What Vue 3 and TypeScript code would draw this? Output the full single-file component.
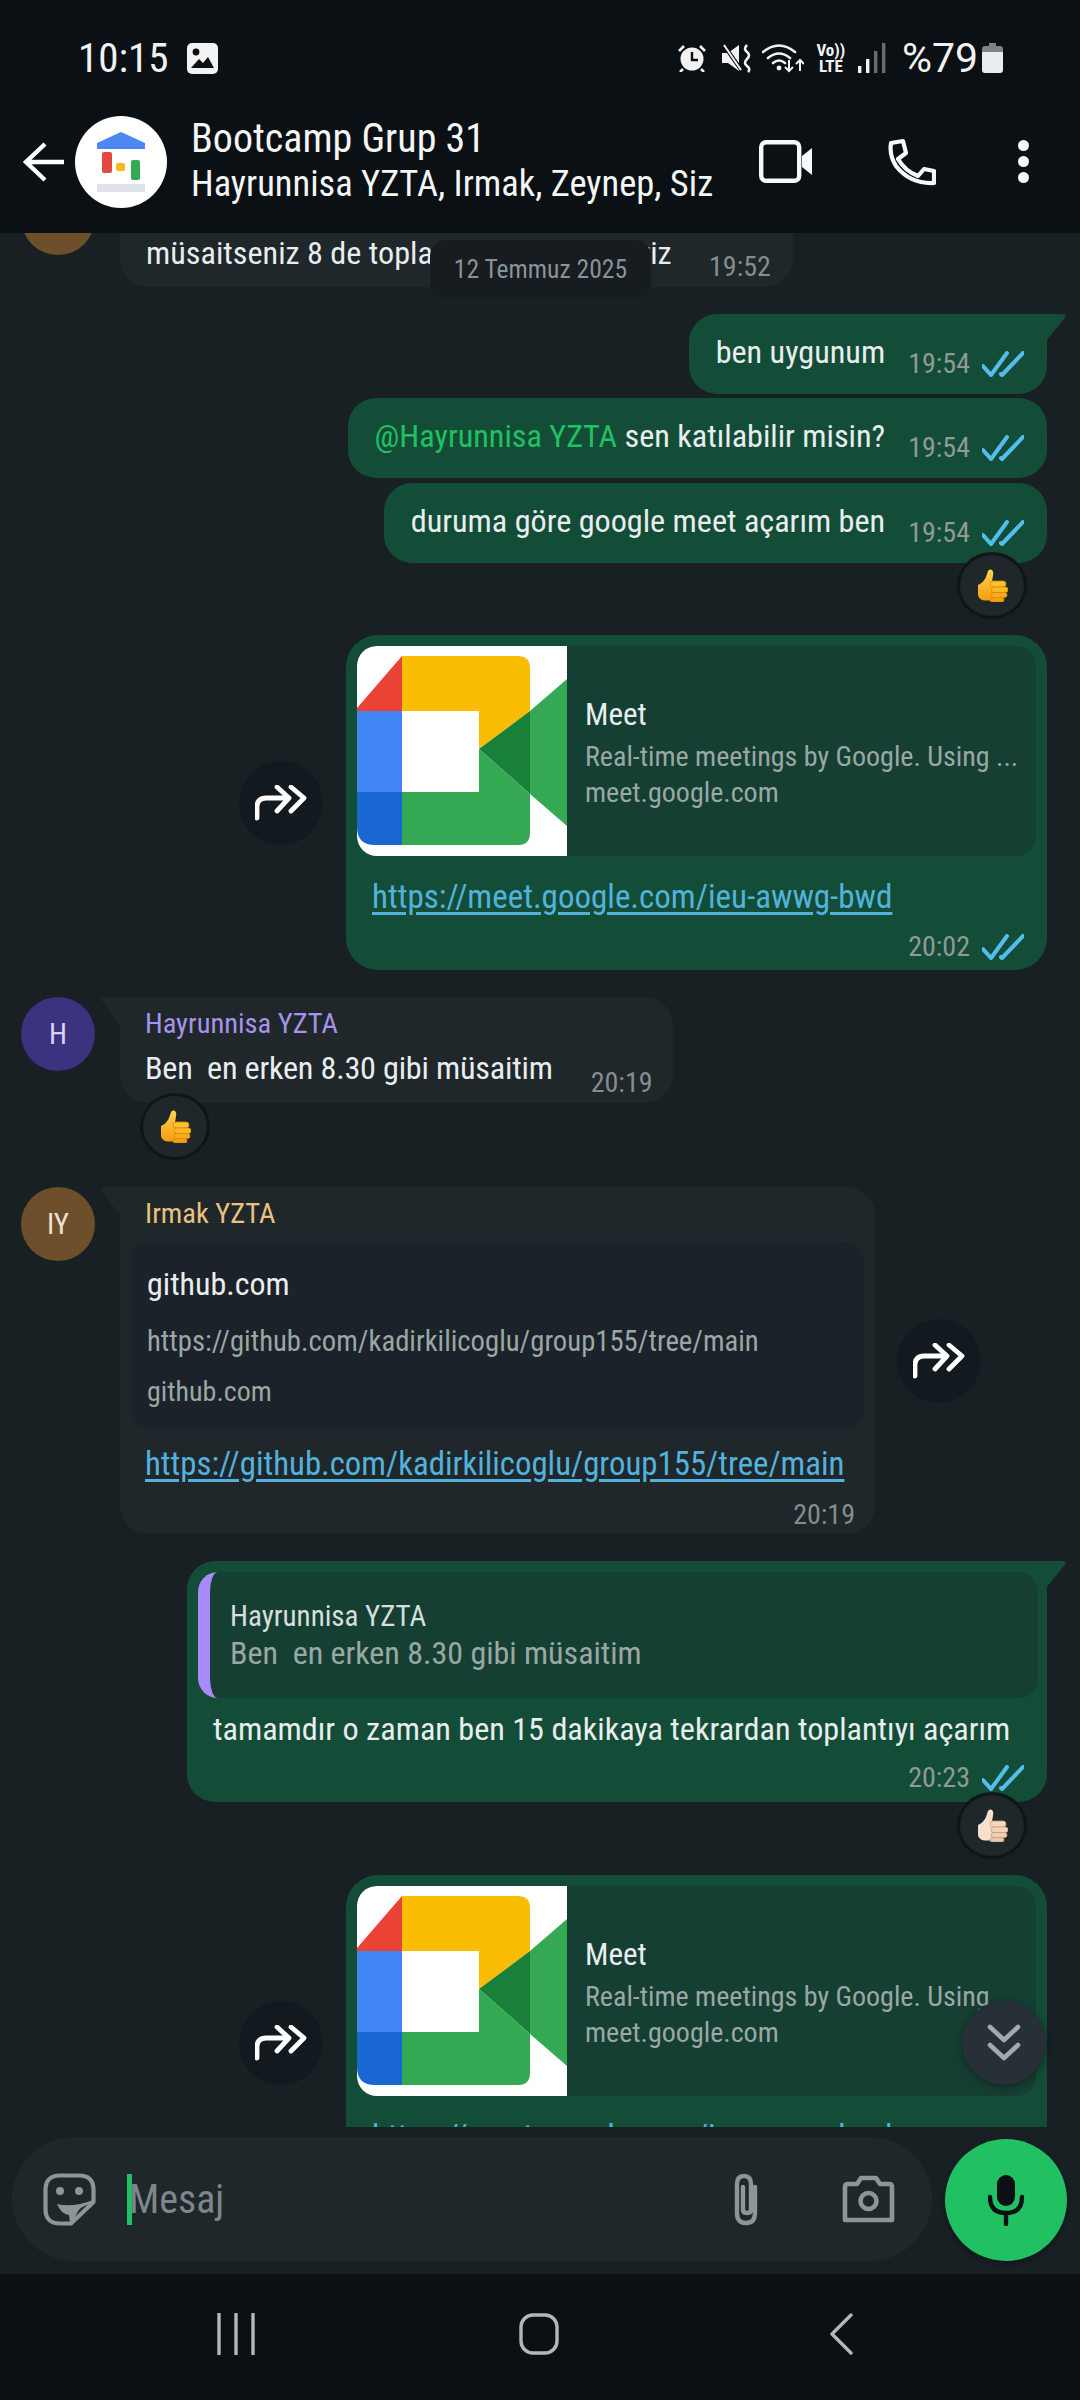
<script setup lang="ts">
const meetText = "Real-time meetings by Google. Using ...";
</script>

<template>
  <div class="phone">
    <svg class="sprite" width="0" height="0">
      <defs>
        <linearGradient id="gold" x1="0" y1="0" x2="0" y2="1">
          <stop offset="0" stop-color="#ffd54a" />
          <stop offset="1" stop-color="#f69d10" />
        </linearGradient>
      </defs>
      <symbol id="ticks" viewBox="0 0 42 26">
        <path d="M1 15l8 9L25 2M19 23l1 1L41 2" fill="none" stroke="#53bdeb" stroke-width="4" stroke-linecap="round" stroke-linejoin="round" />
      </symbol>
      <symbol id="forward" viewBox="0 0 52 36">
        <path d="M2 33V22q0-9 9-9h22" fill="none" stroke="#fff" stroke-width="4.8" stroke-linecap="round" />
        <path d="M22 2l12 11-12 13M36 2l13 11-13 13" fill="none" stroke="#fff" stroke-width="4.8" stroke-linecap="round" stroke-linejoin="round" />
      </symbol>
      <symbol id="thumb" viewBox="0 0 31 33">
        <path d="M1 16q6-3 8-8 1-3 2-6 1-2 3-1.500 3 1 2 6l-1 6v19H8q-4 0-6-3-1-1-1-3z" fill="url(#gold)" />
        <rect x="13" y="12" width="16" height="6" rx="3" fill="#fcc22e" stroke="#d98a0b" stroke-width=".8" />
        <rect x="14" y="18" width="17" height="5.500" rx="2.700" fill="#fcb824" stroke="#d98a0b" stroke-width=".8" />
        <rect x="14" y="23.500" width="16" height="5" rx="2.500" fill="#f8aa18" stroke="#d98a0b" stroke-width=".8" />
        <rect x="13" y="28.500" width="14" height="4.500" rx="2.200" fill="#f59f10" stroke="#d98a0b" stroke-width=".8" />
      </symbol>
      <symbol id="thumb-light" viewBox="0 0 31 33">
        <path d="M1 16q6-3 8-8 1-3 2-6 1-2 3-1.500 3 1 2 6l-1 6v19H8q-4 0-6-3-1-1-1-3z" fill="#f8e0cc" />
        <rect x="13" y="12" width="16" height="6" rx="3" fill="#f6d8c0" stroke="#cf9f7e" stroke-width=".8" />
        <rect x="14" y="18" width="17" height="5.500" rx="2.700" fill="#f4d3ba" stroke="#cf9f7e" stroke-width=".8" />
        <rect x="14" y="23.500" width="16" height="5" rx="2.500" fill="#f0cdb3" stroke="#cf9f7e" stroke-width=".8" />
        <rect x="13" y="28.500" width="14" height="4.500" rx="2.200" fill="#ebc5a9" stroke="#cf9f7e" stroke-width=".8" />
      </symbol>
      <symbol id="meet" viewBox="0 0 210 210">
        <rect width="210" height="210" fill="#fff" />
        <path d="M45 10L0 62v3h45z" fill="#ea4335" />
        <path d="M45 10h116q12 0 12 12v43l-51 38V65H45z" fill="#fbbc04" />
        <path d="M173 65l37-32v147l-37-32z" fill="#34a853" />
        <path d="M122 103l51-38v83z" fill="#188038" />
        <path d="M45 146h77v-43l51 45v39q0 12-12 12H45z" fill="#34a853" />
        <rect y="65" width="45" height="81" fill="#4285f4" />
        <path d="M0 146h45v53H18q-18 0-18-18z" fill="#1967d2" />
      </symbol>
    </svg>

    <div class="status">
      <span class="clock">10:15</span>
      <svg class="gallery" width="31" height="31" viewBox="0 0 31 31">
        <rect width="31" height="31" rx="5" fill="#f2f2f2" />
        <circle cx="9" cy="9" r="3.4" fill="#0b1014" />
        <path d="M4 25l8-9 4 4 5-6 6 11z" fill="#0b1014" />
      </svg>
      <div class="status-right">
        <svg class="alarm" width="30" height="28" viewBox="0 0 30 28">
          <circle cx="15" cy="15" r="11.5" fill="#f2f2f2" />
          <path d="M15 8v8h6" fill="none" stroke="#0b1014" stroke-width="2.4" />
          <path d="M2 7l5-5M28 7l-5-5M6 25l-3 3M24 25l3 3" stroke="#f2f2f2" stroke-width="2.6" />
        </svg>
        <svg width="30" height="30" viewBox="0 0 30 30">
          <path d="M0 10h6l11-8v26l-11-8H0z" fill="#f2f2f2" />
          <path d="M1 1l19 27" stroke="#0b1014" stroke-width="4" />
          <path d="M2 2l17 25" stroke="#f2f2f2" stroke-width="2" />
          <path d="M25 2q-4 4 0 7t0 7 0 7 1 6" fill="none" stroke="#f2f2f2" stroke-width="2.6" />
        </svg>
        <svg width="42" height="30" viewBox="0 0 42 30">
          <path d="M1 9q16-13 32 0M6 15q11-9 22 0M11 20q6-5 12 0" fill="none" stroke="#f2f2f2" stroke-width="2.6" stroke-linecap="round" />
          <circle cx="17" cy="25" r="2.4" fill="#f2f2f2" />
          <path d="M27 17v11M23 24l4 4 4-4M38 28V17M34 21l4-4 4 4" fill="none" stroke="#f2f2f2" stroke-width="2" />
        </svg>
        <div class="volte"><span>Vo))</span><span>LTE</span></div>
        <svg width="28" height="30" viewBox="0 0 28 30">
          <rect y="23" width="3.4" height="7" fill="#f2f2f2" />
          <rect x="8" y="16" width="3.4" height="14" fill="#f2f2f2" />
          <rect x="16" y="8" width="3.4" height="22" fill="#666c70" />
          <rect x="24" y="0" width="3.4" height="30" fill="#666c70" />
        </svg>
        <span class="percent">%79</span>
        <svg class="battery" width="21" height="30" viewBox="0 0 21 30">
          <path d="M7 0h7v3h4q3 0 3 3v5H0V6q0-3 3-3h4z" fill="#7d8285" />
          <path d="M0 9h21v18q0 3-3 3H3q-3 0-3-3z" fill="#ececec" />
        </svg>
      </div>
    </div>

    <header class="header">
      <svg width="42" height="40" viewBox="0 0 42 40">
        <path d="M22 2L3 20l19 18M3 20h38" fill="none" stroke="#fff" stroke-width="4.4" />
      </svg>
      <div class="group-avatar">
        <svg width="92" height="92" viewBox="0 0 92 92">
          <path d="M22 27L46 16l24 11v6H22z" fill="#4b89f0" />
          <rect x="27" y="36" width="10" height="21" rx="2" fill="#e5483c" />
          <rect x="41" y="47" width="9" height="8" rx="2" fill="#f5b921" />
          <rect x="56" y="44" width="9" height="20" rx="2" fill="#34a853" />
          <rect x="22" y="68" width="48" height="8" fill="#dfe2e8" />
        </svg>
      </div>
      <div class="titles">
        <div class="title">Bootcamp Grup 31</div>
        <div class="subtitle">Hayrunnisa YZTA, Irmak, Zeynep, Siz</div>
      </div>
      <div class="actions">
        <svg width="53" height="43" viewBox="0 0 53 43">
          <rect x="2.2" y="2.2" width="38" height="38.600" rx="5" fill="none" stroke="#f7f8fa" stroke-width="4.4" />
          <path d="M43 16l10-8v27l-10-8z" fill="#f7f8fa" />
        </svg>
        <svg class="call" width="48" height="48" viewBox="0 0 48 48">
          <path d="M3 5l12-2 3 12-8 6q7 12 20 17l6-7 10 2v12q-24 1-38-17Q1 17 3 5z" fill="none" stroke="#f7f8fa" stroke-width="4.2" stroke-linejoin="round" />
        </svg>
        <div class="dots"><i></i><i></i><i></i></div>
      </div>
    </header>

    <main class="chat">
      <div class="row in first">
        <div class="avatar brown">IY</div>
        <div class="bubble in-bubble clipped">
          <div class="line">
            <span class="text">müsaitseniz 8 de toplanalım konuşabiliriz</span>
            <span class="meta"><span class="time">19:52</span></span>
          </div>
        </div>
      </div>

      <div class="row out gap-first">
        <div class="bubble out-bubble tail-right short">
          <span class="text">ben uygunum</span>
          <span class="meta"><span class="time">19:54</span><svg class="ticks"><use href="#ticks" /></svg></span>
        </div>
      </div>
      <div class="row out gap-4">
        <div class="bubble out-bubble short">
          <span class="text"><span class="mention">@Hayrunnisa YZTA</span> sen katılabilir misin?</span>
          <span class="meta"><span class="time">19:54</span><svg class="ticks"><use href="#ticks" /></svg></span>
        </div>
      </div>
      <div class="row out gap-5">
        <div class="bubble out-bubble short">
          <span class="text">duruma göre google meet açarım ben</span>
          <span class="meta"><span class="time">19:54</span><svg class="ticks"><use href="#ticks" /></svg></span>
        </div>
      </div>
      <div class="reaction-row right tight">
        <div class="reaction"><svg width="31" height="33"><use href="#thumb" /></svg></div>
      </div>

      <div class="row out forward-row gap-15">
        <div class="forward"><svg width="52" height="36"><use href="#forward" /></svg></div>
        <div class="bubble out-bubble meet-bubble">
          <div class="link-preview">
            <svg class="meet-img" width="210" height="210"><use href="#meet" /></svg>
            <div class="preview-text">
              <div class="preview-title">Meet</div>
              <div class="preview-desc first-desc">{{ meetText }}</div>
              <div class="preview-desc">meet.google.com</div>
            </div>
          </div>
          <div class="link meet-link">https://meet.google.com/ieu-awwg-bwd</div>
          <div class="meta-line"><span class="time">20:02</span><svg class="ticks"><use href="#ticks" /></svg></div>
        </div>
      </div>

      <div class="row in gap-27">
        <div class="avatar purple">H</div>
        <div class="bubble in-bubble tail-left hayr">
          <div class="name lilac">Hayrunnisa YZTA</div>
          <div class="line">
            <span class="text">Ben&nbsp; en erken 8.30 gibi müsaitim</span>
            <span class="meta"><span class="time">20:19</span></span>
          </div>
        </div>
      </div>
      <div class="reaction-row left">
        <div class="reaction"><svg width="31" height="33"><use href="#thumb" /></svg></div>
      </div>

      <div class="row in gap-27 with-forward">
        <div class="avatar brown">IY</div>
        <div class="bubble in-bubble tail-left github">
          <div class="name sand">Irmak YZTA</div>
          <div class="github-preview">
            <div class="preview-title">github.com</div>
            <div class="preview-desc url">https://github.com/kadirkilicoglu/group155/tree/main</div>
            <div class="preview-desc domain">github.com</div>
          </div>
          <div class="link github-link">https://github.com/kadirkilicoglu/group155/tree/main</div>
          <div class="meta-line in-meta"><span class="time">20:19</span></div>
        </div>
        <div class="forward"><svg width="52" height="36"><use href="#forward" /></svg></div>
      </div>

      <div class="row out gap-27">
        <div class="bubble out-bubble tail-right reply">
          <div class="quote">
            <div class="quote-name">Hayrunnisa YZTA</div>
            <div class="quote-text">Ben&nbsp; en erken 8.30 gibi müsaitim</div>
          </div>
          <div class="reply-body text">tamamdır o zaman ben 15 dakikaya tekrardan toplantıyı açarım</div>
          <div class="meta-line reply-meta"><span class="time">20:23</span><svg class="ticks"><use href="#ticks" /></svg></div>
        </div>
      </div>
      <div class="reaction-row right">
        <div class="reaction"><svg width="31" height="33"><use href="#thumb-light" /></svg></div>
      </div>

      <div class="row out forward-row gap-15">
        <div class="forward"><svg width="52" height="36"><use href="#forward" /></svg></div>
        <div class="bubble out-bubble meet-bubble">
          <div class="link-preview">
            <svg class="meet-img" width="210" height="210"><use href="#meet" /></svg>
            <div class="preview-text">
              <div class="preview-title">Meet</div>
              <div class="preview-desc first-desc">{{ meetText }}</div>
              <div class="preview-desc">meet.google.com</div>
            </div>
          </div>
          <div class="link meet-link">https://meet.google.com/ieu-awwg-bwd</div>
        </div>
      </div>

      <div class="date-chip">12 Temmuz 2025</div>
      <div class="scroll-down">
        <svg width="34" height="38" viewBox="0 0 34 38">
          <path d="M3 3l14 13L31 3M3 21l14 13 14-13" fill="none" stroke="#a3a9ac" stroke-width="4.6" stroke-linecap="round" stroke-linejoin="round" />
        </svg>
      </div>
    </main>

    <div class="composer">
      <div class="input">
        <svg class="sticker" width="53" height="53" viewBox="0 0 53 53">
          <path d="M17 2.500h19Q50.500 2.500 50.500 17v12L28 50.500H17Q2.500 50.500 2.500 36V17Q2.500 2.500 17 2.500z" fill="none" stroke="#8e9598" stroke-width="4.200" stroke-linejoin="round" />
          <circle cx="17" cy="18" r="4" fill="#8e9598" />
          <circle cx="36" cy="18" r="4" fill="#8e9598" />
          <path d="M14 31q16 4 36-4v3q-14 3-17 12l-2 8h-4l-1-8q-8-1-12-11z" fill="#8e9598" />
        </svg>
        <i class="cursor"></i>
        <span class="placeholder">Mesaj</span>
        <svg class="clip" width="34" height="53" viewBox="0 0 34 53">
          <path d="M26 14v26q0 10-9 10T8 40V11q0-8 7-8t7 8v26q0 3-4 3t-4-3V14" fill="none" stroke="#8e9598" stroke-width="4.4" stroke-linecap="round" />
        </svg>
        <svg class="camera" width="53" height="48" viewBox="0 0 53 48">
          <path d="M3 12q0-3 3-3h9l4-6h15l4 6h9q3 0 3 3v33H3z" fill="none" stroke="#8e9598" stroke-width="4.6" stroke-linejoin="round" />
          <circle cx="26.5" cy="26" r="8" fill="none" stroke="#8e9598" stroke-width="4.6" />
        </svg>
      </div>
      <div class="mic">
        <svg width="38" height="52" viewBox="0 0 38 52">
          <rect x="10" y="1" width="18" height="31" rx="9" fill="#0b1014" />
          <path d="M3 23q0 16 16 16t16-16M19 39v11" fill="none" stroke="#0b1014" stroke-width="4.4" stroke-linecap="round" />
        </svg>
      </div>
    </div>

    <nav class="nav">
      <svg width="38" height="42" viewBox="0 0 38 42">
        <path d="M2 1v40M19 1v40M36 1v40" stroke="#b4b7b9" stroke-width="3.4" stroke-linecap="round" />
      </svg>
      <svg class="home" width="40" height="42" viewBox="0 0 40 42">
        <rect x="2" y="2" width="36" height="38" rx="12" fill="none" stroke="#b4b7b9" stroke-width="3.4" />
      </svg>
      <svg width="23" height="42" viewBox="0 0 23 42">
        <path d="M21 2L2 21l19 19" fill="none" stroke="#b4b7b9" stroke-width="3.4" stroke-linecap="round" stroke-linejoin="round" />
      </svg>
    </nav>
  </div>
</template>

<style>
html,
body {
  margin: 0;
  background: #0b1014;
}
</style>

<style scoped>
.phone {
  width: 1080px;
  height: 2400px;
  display: flex;
  flex-direction: column;
  background: #182024;
  color: #e9edef;
  font-family: Roboto, "Noto Sans", sans-serif;
  font-stretch: 85%;
  overflow: hidden;
}

.sprite {
  position: absolute;
}

.status {
  height: 100px;
  box-sizing: border-box;
  padding: 16px 77px 0 78px;
  display: flex;
  align-items: center;
  background: #0b1014;
  color: #f2f2f2;
  flex: none;
}

.clock {
  font-size: 41px;
}

.gallery {
  margin-left: 18px;
}

.status-right {
  margin-left: auto;
  display: flex;
  align-items: center;
  gap: 10px;
}

.alarm {
  margin-right: 5px;
}

.volte {
  display: flex;
  flex-direction: column;
  font-size: 17px;
  font-weight: 700;
  line-height: 16px;
  width: 34px;
  text-align: center;
}

.percent {
  font-size: 41px;
  font-stretch: 100%;
  margin: 0 0 0 6px;
}

.battery {
  margin-left: -6px;
}

.header {
  height: 133px;
  box-sizing: border-box;
  padding: 0 51px 10px 23px;
  display: flex;
  align-items: center;
  background: #0b1014;
  flex: none;
}

.group-avatar {
  width: 92px;
  height: 92px;
  border-radius: 50%;
  background: #fff;
  margin-left: 10px;
  flex: none;
}

.titles {
  margin-left: 24px;
  margin-top: -2px;
}

.title {
  font-size: 40px;
  line-height: 46px;
  color: #f4f5f5;
}

.subtitle {
  font-size: 36.5px;
  line-height: 44px;
  color: #f4f5f5;
  white-space: nowrap;
}

.actions {
  margin-left: auto;
  display: flex;
  align-items: center;
  gap: 76px;
}

.call {
  margin-right: 6px;
}

.dots {
  display: flex;
  flex-direction: column;
  gap: 5px;
}

.dots i {
  width: 11px;
  height: 11px;
  border-radius: 50%;
  background: #f7f8fa;
}

.chat {
  flex: 1;
  min-height: 0;
  position: relative;
  overflow: hidden;
  display: flex;
  flex-direction: column;
}

.row {
  display: flex;
  flex: none;
}

.row.in {
  padding-left: 21px;
  gap: 25px;
}

.row.out {
  justify-content: flex-end;
  padding-right: 33px;
}

.row.first {
  margin-top: -52px;
}

.gap-first {
  margin-top: 27px;
}

.gap-4 {
  margin-top: 4px;
}

.gap-5 {
  margin-top: 5px;
}

.gap-15 {
  margin-top: 16px;
}

.gap-27 {
  margin-top: 27px;
}

.avatar {
  width: 74px;
  height: 74px;
  border-radius: 50%;
  flex: none;
  display: flex;
  align-items: center;
  justify-content: center;
  font-size: 29px;
  color: #ece3d6;
}

.avatar.brown {
  background: #6e4f2b;
}

.avatar.purple {
  background: #3b3280;
  color: #d9d4f5;
}

.bubble {
  position: relative;
  box-sizing: border-box;
  border-radius: 28px;
  flex: none;
}

.in-bubble {
  background: #1f272a;
}

.out-bubble {
  background: #144d37;
}

.tail-right {
  border-top-right-radius: 0;
}

.tail-right::after {
  content: "";
  position: absolute;
  right: -19px;
  top: 0;
  width: 21px;
  height: 26px;
  background: #144d37;
  clip-path: polygon(0 0, 92% 0, 100% 10%, 8% 100%, 0 100%);
}

.tail-left {
  border-top-left-radius: 0;
}

.tail-left::before {
  content: "";
  position: absolute;
  left: -19px;
  top: 0;
  width: 21px;
  height: 29px;
  background: #1f272a;
  clip-path: polygon(8% 0, 100% 0, 100% 100%, 92% 100%, 0 10%);
}

.short {
  display: flex;
  padding: 15px 23px 19px 27px;
}

.clipped {
  padding: 49px 22px 11px 26px;
}

.line {
  display: flex;
}

.text {
  font-size: 32.2px;
  line-height: 46px;
  white-space: nowrap;
}

.mention {
  color: #21c063;
}

.meta {
  display: flex;
  align-items: center;
  align-self: flex-end;
  height: 30px;
  margin: 0 0 -4px 23px;
}

.clipped .text {
  width: 526px;
}

.clipped .meta {
  margin-left: 37px;
  margin-bottom: -6px;
}

.time {
  font-size: 28px;
  line-height: 30px;
  color: #8f9a97;
}

.ticks {
  width: 42px;
  height: 26px;
  margin-left: 12px;
}

.in-bubble .time {
  color: #868d90;
}

.reaction-row {
  display: flex;
  flex: none;
  margin-top: -10px;
  position: relative;
}

.reaction-row.tight {
  margin-top: -11px;
}

.reaction-row.right {
  justify-content: flex-end;
  padding-right: 53px;
}

.reaction-row.left {
  padding-left: 140px;
}

.reaction {
  box-sizing: border-box;
  width: 70px;
  height: 67px;
  border-radius: 50%;
  background: #1f272a;
  border: 3px solid #0f1518;
  display: flex;
  align-items: center;
  justify-content: center;
}

.forward-row {
  align-items: center;
  gap: 23px;
}

.with-forward {
  align-items: flex-start;
}

.forward {
  width: 84px;
  height: 84px;
  border-radius: 50%;
  background: #131a1f;
  display: flex;
  align-items: center;
  justify-content: center;
  flex: none;
}

.with-forward .forward {
  align-self: center;
  margin-left: -3px;
}

.meet-bubble {
  width: 701px;
  height: 335px;
  padding: 11px;
  border-radius: 32px;
}

.link-preview {
  display: flex;
  height: 210px;
  border-radius: 20px;
  background: #163f33;
  overflow: hidden;
}

.meet-img {
  flex: none;
}

.preview-text {
  padding: 3px 0 0 18px;
  display: flex;
  flex-direction: column;
  justify-content: center;
  white-space: nowrap;
}

.preview-title {
  font-size: 31px;
  line-height: 40px;
  color: #e9edef;
}

.preview-desc {
  font-size: 28px;
  line-height: 36px;
  color: #9aa8a3;
}

.first-desc {
  margin-top: 4px;
}

.link {
  font-size: 33px;
  line-height: 44px;
  color: #53b2dc;
  text-decoration: underline;
  text-underline-offset: 4px;
  white-space: nowrap;
}

.meet-link {
  margin: 19px 0 0 15px;
}

.github-link {
  font-size: 32.8px;
}

.meta-line {
  display: flex;
  align-items: center;
  justify-content: flex-end;
  height: 30px;
  margin: 13px 12px 0 0;
}

.name {
  font-size: 28.5px;
  line-height: 34px;
}

.lilac {
  color: #a693eb;
}

.sand {
  color: #e9c27f;
}

.hayr {
  padding: 10px 20px 12px 25px;
}

.hayr .line {
  margin-top: 4px;
}

.hayr .text {
  letter-spacing: -0.2px;
}

.hayr .meta {
  margin-left: 38px;
  margin-bottom: -7px;
}

.github {
  width: 755px;
  height: 347px;
  padding: 10px 11px 4px;
}

.github .name {
  margin-left: 14px;
}

.github-preview {
  margin-top: 11px;
  height: 186px;
  box-sizing: border-box;
  padding: 22px 0 0 16px;
  border-radius: 20px;
  background: #1b2229;
}

.github-preview .preview-title {
  font-size: 32px;
}

.url {
  margin-top: 19px;
  font-size: 28.7px;
}

.domain {
  margin-top: 15px;
}

.github-link {
  margin: 14px 0 0 14px;
}

.in-meta {
  margin: 14px 9px 0 0;
}

.reply {
  width: 860px;
  height: 241px;
  padding: 11px 9px 9px 11px;
}

.quote {
  height: 126px;
  box-sizing: border-box;
  padding: 27px 0 0 20px;
  border-left: 12px solid #a78bfa;
  border-radius: 20px;
  background: #163f33;
}

.quote-name {
  font-size: 29px;
  line-height: 34px;
  color: #d5dfdc;
}

.quote-text {
  font-size: 32px;
  line-height: 40px;
  color: #9aa8a3;
}

.reply-body {
  margin: 8px 0 0 15px;
}

.reply-meta {
  margin: 11px 14px 0 0;
}

.date-chip {
  position: absolute;
  left: 430px;
  top: 7px;
  width: 221px;
  height: 58px;
  border-radius: 16px;
  background: #161c20;
  color: #8a9296;
  font-size: 25.6px;
  line-height: 58px;
  text-align: center;
}

.scroll-down {
  position: absolute;
  right: 34px;
  bottom: 42px;
  width: 84px;
  height: 84px;
  border-radius: 50%;
  background: #263036;
  box-shadow: 0 2px 8px rgba(0, 0, 0, 0.4);
  display: flex;
  align-items: center;
  justify-content: center;
}

.composer {
  height: 147px;
  box-sizing: border-box;
  padding: 10px 13px 13px 12px;
  display: flex;
  gap: 13px;
  flex: none;
}

.input {
  flex: 1;
  height: 124px;
  border-radius: 62px;
  background: #1f272a;
  display: flex;
  align-items: center;
  padding: 0 37px 0 31px;
}

.cursor {
  width: 5px;
  height: 51px;
  margin-left: 31px;
  background: #21c063;
}

.placeholder {
  margin-left: -3px;
  font-size: 40px;
  color: #7d8689;
}

.clip {
  margin-left: auto;
}

.camera {
  margin-left: 79px;
}

.mic {
  width: 122px;
  height: 122px;
  border-radius: 50%;
  margin-top: 2px;
  background: #21c063;
  box-shadow: 0 3px 6px rgba(0, 0, 0, 0.3);
  display: flex;
  align-items: center;
  justify-content: center;
}

.nav {
  height: 126px;
  box-sizing: border-box;
  padding: 0 227px 6px 217px;
  background: #0b1014;
  display: flex;
  align-items: center;
  justify-content: space-between;
  flex: none;
}

.home {
  margin-right: 8px;
}
</style>
